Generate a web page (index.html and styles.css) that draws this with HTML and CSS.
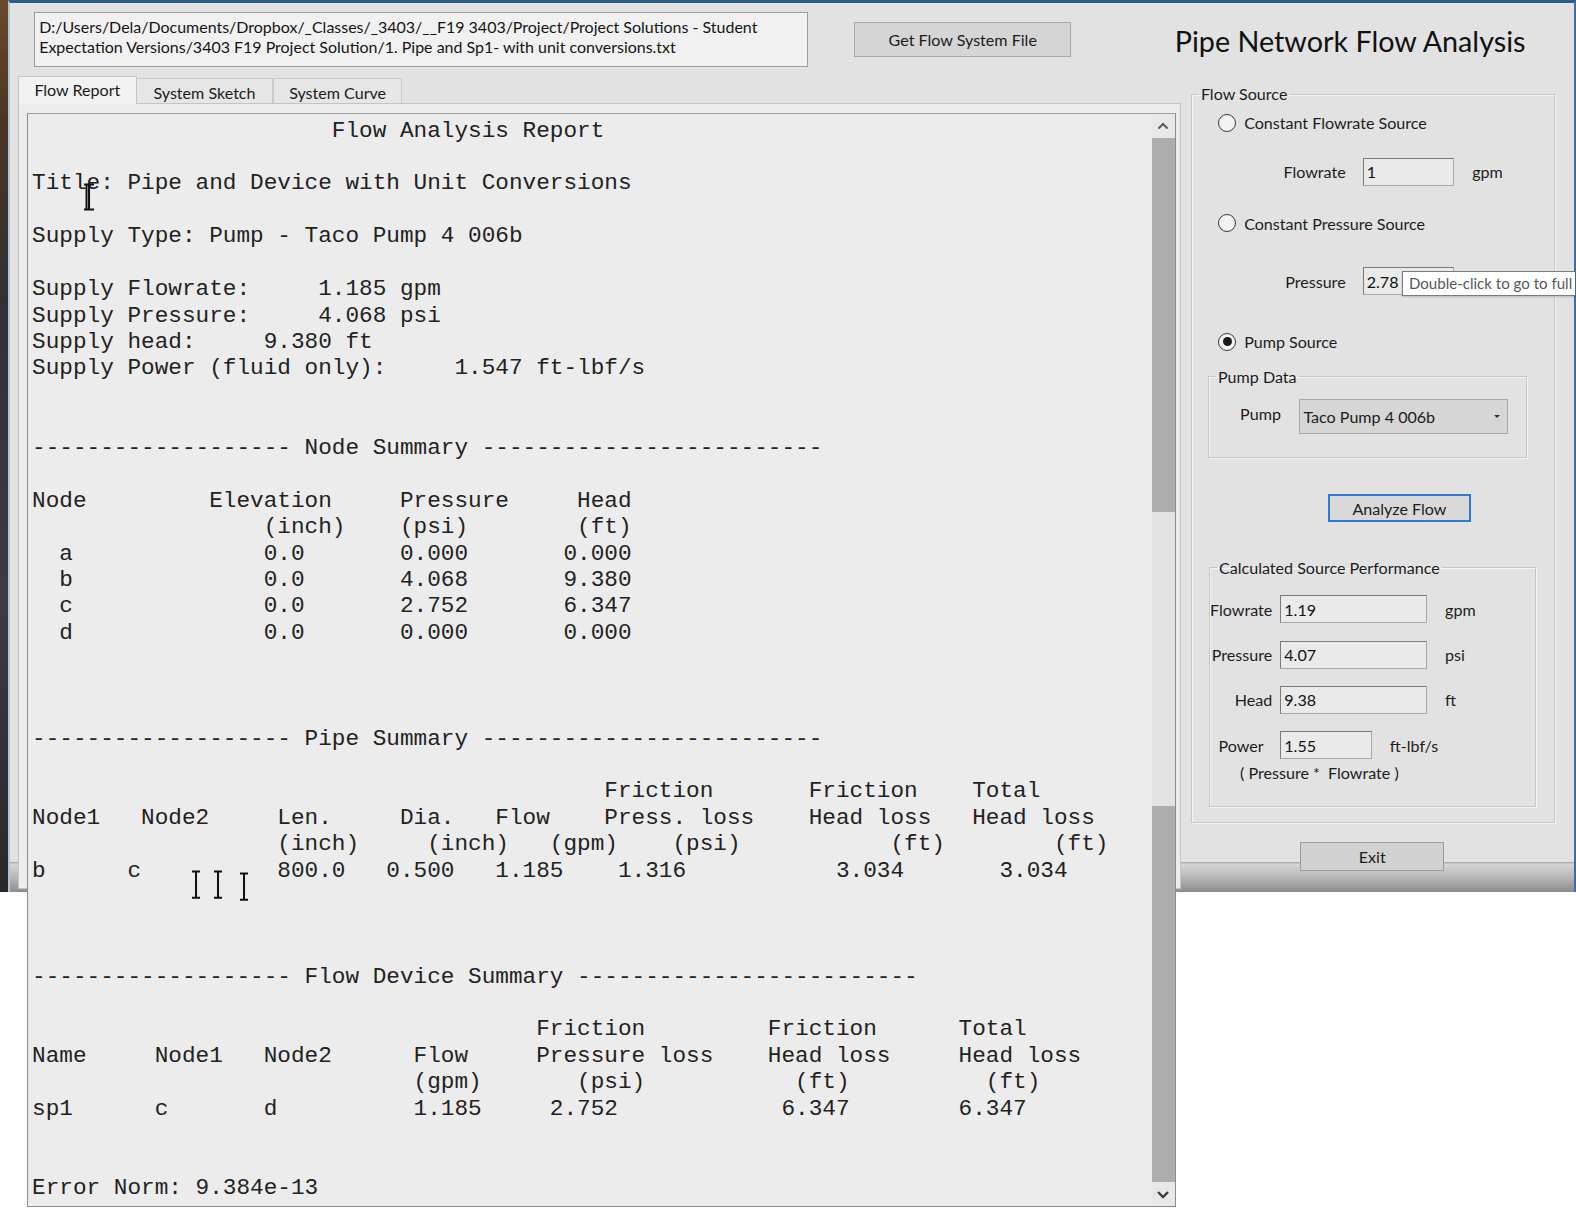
FILE: index.html
```html
<!DOCTYPE html>
<html>
<head>
<meta charset="utf-8">
<link rel="stylesheet" href="styles.css">
</head>
<body>
<div class="screen">
  <div class="desk-left"></div>
  <div class="window">
    <header class="win-header">
      <div class="path-box">D:/Users/Dela/Documents/Dropbox/_Classes/_3403/__F19 3403/Project/Project Solutions - Student<br>Expectation Versions/3403 F19 Project Solution/1. Pipe and Sp1- with unit conversions.txt</div>
      <button class="btn btn-file">Get Flow System File</button>
      <h1 class="app-title">Pipe Network Flow Analysis</h1>
    </header>
    <div class="win-body">
      <section class="left-col">
        <div class="tabs">
          <div class="tab tab-active">Flow Report</div>
          <div class="tab tab-sketch">System Sketch</div>
          <div class="tab tab-curve">System Curve</div>
        </div>
        <div class="pane">
          <div class="report">
<pre class="report-text">                      Flow Analysis Report

Title: Pipe and Device with Unit Conversions

Supply Type: Pump - Taco Pump 4 006b

Supply Flowrate:     1.185 gpm
Supply Pressure:     4.068 psi
Supply head:     9.380 ft
Supply Power (fluid only):     1.547 ft-lbf/s


------------------- Node Summary -------------------------

Node         Elevation     Pressure     Head
                 (inch)    (psi)        (ft)
  a              0.0       0.000       0.000
  b              0.0       4.068       9.380
  c              0.0       2.752       6.347
  d              0.0       0.000       0.000



------------------- Pipe Summary -------------------------

                                          Friction       Friction    Total
Node1   Node2     Len.     Dia.   Flow    Press. loss    Head loss   Head loss
                  (inch)     (inch)   (gpm)    (psi)           (ft)        (ft)
b      c          800.0   0.500   1.185    1.316           3.034       3.034



------------------- Flow Device Summary -------------------------

                                     Friction         Friction      Total
Name     Node1   Node2      Flow     Pressure loss    Head loss     Head loss
                            (gpm)       (psi)           (ft)          (ft)
sp1      c       d          1.185     2.752            6.347        6.347


Error Norm: 9.384e-13</pre>
            <div class="scrollbar">
              <div class="sb-btn">
                <svg width="16" height="14" viewBox="0 0 16 14"><polyline points="3.5,9.5 8,5 12.5,9.5" fill="none" stroke="#5a5a5a" stroke-width="2"/></svg>
              </div>
              <div class="sb-thumb sb-thumb-top"></div>
              <div class="sb-track"></div>
              <div class="sb-thumb sb-thumb-bottom"></div>
              <div class="sb-btn">
                <svg width="16" height="14" viewBox="0 0 16 14"><polyline points="3,5 8,10 13,5" fill="none" stroke="#3c3c3c" stroke-width="2.4"/></svg>
              </div>
            </div>
            <svg class="ibeam ibeam-title" width="12" height="28" viewBox="0 0 12 28"><path d="M1 1.5 H11 M6 1.5 V26.5 M1 26.5 H11 M3.5 1.5 V26.5" fill="none" stroke="#111" stroke-width="2"/></svg>
            <svg class="ibeam ibeam-1" width="10" height="29" viewBox="0 0 10 29"><path d="M1 1.5 H9 M5 1.5 V27.5 M1 27.5 H9" fill="none" stroke="#111" stroke-width="2"/></svg>
            <svg class="ibeam ibeam-2" width="10" height="29" viewBox="0 0 10 29"><path d="M1 1.5 H9 M5 1.5 V27.5 M1 27.5 H9" fill="none" stroke="#111" stroke-width="2"/></svg>
            <svg class="ibeam ibeam-3" width="10" height="29" viewBox="0 0 10 29"><path d="M1 1.5 H9 M5 1.5 V27.5 M1 27.5 H9" fill="none" stroke="#111" stroke-width="2"/></svg>
          </div>
        </div>
      </section>
      <aside class="right-col">
        <fieldset class="group flow-source">
          <legend>Flow Source</legend>
          <div class="radio-row row-r1"><span class="radio"></span><span>Constant Flowrate Source</span></div>
          <div class="field-row row-flow">
            <span class="field-label">Flowrate</span>
            <span class="input input-src">1</span>
            <span class="unit">gpm</span>
          </div>
          <div class="radio-row row-r2"><span class="radio"></span><span>Constant Pressure Source</span></div>
          <div class="field-row row-press">
            <span class="field-label">Pressure</span>
            <span class="input input-src input-tip">2.78<span class="tooltip">Double-click to go to full</span></span>
            <span class="unit">psi</span>
          </div>
          <div class="radio-row row-r3"><span class="radio radio-on"></span><span>Pump Source</span></div>
          <fieldset class="group pump-data">
            <legend>Pump Data</legend>
            <div class="pump-row">
              <span class="pump-label">Pump</span>
              <div class="combo"><span>Taco Pump 4 006b</span><svg width="8" height="5" viewBox="0 0 8 5"><path d="M1 1 H7 L4 4 Z" fill="#333"/></svg></div>
            </div>
          </fieldset>
          <button class="btn btn-analyze">Analyze Flow</button>
          <fieldset class="group calc">
            <legend>Calculated Source Performance</legend>
            <div class="calc-row">
              <span class="calc-label">Flowrate</span>
              <span class="input input-calc">1.19</span>
              <span class="unit">gpm</span>
            </div>
            <div class="calc-row">
              <span class="calc-label">Pressure</span>
              <span class="input input-calc">4.07</span>
              <span class="unit">psi</span>
            </div>
            <div class="calc-row">
              <span class="calc-label">Head</span>
              <span class="input input-calc">9.38</span>
              <span class="unit">ft</span>
            </div>
            <div class="calc-row">
              <span class="calc-label calc-label-center">Power</span>
              <span class="input input-power">1.55</span>
              <span class="unit">ft-lbf/s</span>
            </div>
            <div class="calc-note">( Pressure *&nbsp; Flowrate )</div>
          </fieldset>
        </fieldset>
        <button class="btn btn-exit">Exit</button>
      </aside>
    </div>
  </div>
</div>
</body>
</html>
```
FILE: styles.css
```css
html {
  margin: 0;
  padding: 0;
  background: #ffffff;
}
body {
  margin: 0;
  padding: 0;
  width: 1576px;
  height: 1226px;
  overflow: hidden;
  background: #ffffff;
  font-family: Lato, "Open Sans", sans-serif;
  font-size: 16px;
  color: #1c1c1c;
}
.screen {
  zoom: 1.005;
  display: flex;
  align-items: flex-start;
  width: 1568px;
  height: 1220px;
  overflow: hidden;
}
.desk-left {
  width: 8px;
  height: 888px;
  flex: none;
  background: linear-gradient(to bottom, #6a4a2c 0, #4a3524 120px, #2f3136 300px, #3a3c42 600px, #26282c 888px);
}
.window {
  box-sizing: border-box;
  width: 1560px;
  height: 888px;
  flex: none;
  border-top: 3px solid #2e5c8a;
  border-left: 2px solid #b5c3d1;
  border-right: 2px solid #3b6ea6;
  background: linear-gradient(to bottom, #e2e2e2 0, #e2e2e2 855px, #a8a8a8 855px, #d6d6d6 857px, #b4b4b4 871px, #8a8a8a 885px);
  display: flex;
  flex-direction: column;
}
.win-header {
  height: 73px;
  flex: none;
  display: flex;
  align-items: flex-start;
}
.win-header > * {
  flex: none;
}
.path-box {
  box-sizing: border-box;
  margin: 9px 0 0 24px;
  width: 770px;
  height: 55px;
  padding: 4px 0 0 4px;
  background: #f1f1f1;
  border: 1px solid #9c9c9c;
  font-size: 15.9px;
  line-height: 20px;
  color: #141414;
  white-space: nowrap;
  overflow: hidden;
}
.btn {
  box-sizing: border-box;
  font-family: Lato, "Open Sans", sans-serif;
  font-size: 16px;
  color: #1c1c1c;
  background: #d5d5d5;
  border: 1px solid #a9a9a9;
  padding: 0;
  display: flex;
  align-items: center;
  justify-content: center;
}
.btn-file {
  margin: 19px 0 0 46px;
  width: 216px;
  height: 35px;
}
.app-title {
  margin: 21px 0 0 103px;
  width: 360px;
  font-weight: normal;
  font-size: 28.6px;
  line-height: 34px;
  color: #111;
  white-space: nowrap;
}
.win-body {
  flex: 1;
  display: grid;
  grid-template-columns: 1166px 390px;
  min-height: 0;
}
.left-col {
  padding-left: 8px;
  min-height: 0;
  min-width: 0;
}
.tabs {
  display: flex;
  align-items: flex-end;
  height: 27px;
  position: relative;
  z-index: 2;
}
.tab {
  box-sizing: border-box;
  height: 25px;
  background: #e6e6e6;
  border: 1px solid #cacaca;
  border-bottom: none;
  display: flex;
  align-items: center;
  justify-content: center;
  padding-top: 3px;
  color: #1a1a1a;
}
.tab-active {
  height: 28px;
  margin-bottom: -1px;
  width: 118px;
  background: #f2f2f2;
  border-color: #c4c4c4;
  padding-top: 0;
  padding-bottom: 2px;
}
.tab-sketch {
  width: 136px;
  border-left: none;
}
.tab-curve {
  width: 128px;
  border-left: 1px solid #cacaca;
}
.pane {
  box-sizing: border-box;
  width: 1157px;
  height: 782px;
  border: 1px solid #c4c4c4;
  background: #ededed;
  padding: 8px 0 0 8px;
}
.report {
  position: relative;
  box-sizing: border-box;
  width: 1143px;
  height: 1089px;
  background: #ececec;
  border: 1px solid #8c8c8c;
  border-top-color: #a0a0a0;
  display: flex;
  z-index: 3;
}
.report-text {
  flex: 1;
  margin: 0;
  padding: 4px 0 0 4px;
  font-family: "Liberation Mono", "Courier New", monospace;
  font-size: 22.6px;
  line-height: 26.3px;
  color: #222;
  overflow: hidden;
}
.scrollbar {
  width: 23px;
  flex: none;
  display: flex;
  flex-direction: column;
  background: #e6e6e6;
}
.sb-btn {
  height: 24px;
  flex: none;
  display: flex;
  align-items: center;
  justify-content: center;
  background: #e8e8e8;
}
.sb-thumb {
  background: #adadad;
  flex: none;
}
.sb-thumb-top {
  height: 373px;
}
.sb-track {
  flex: 1;
  background: #e3e3e3;
}
.sb-thumb-bottom {
  height: 374px;
}
.ibeam {
  position: absolute;
}
.ibeam-title {
  left: 55px;
  top: 69px;
}
.ibeam-1 {
  left: 162px;
  top: 753px;
}
.ibeam-2 {
  left: 184px;
  top: 753px;
}
.ibeam-3 {
  left: 210px;
  top: 755px;
}
.right-col {
  min-width: 0;
}
.group {
  margin: 0;
  padding: 0;
  min-width: 0;
  box-sizing: border-box;
  border: 1px solid #c6c6c6;
  box-shadow: inset 1px 1px 0 #f4f4f4, 1px 1px 0 #f4f4f4;
}
.group legend {
  margin-left: 7px;
  padding: 0 2px;
  font-size: 16px;
  line-height: 18px;
  color: #1c1c1c;
}
.flow-source {
  margin: 9px 0 0 9px;
  width: 362px;
  padding-bottom: 15px;
}
.radio-row {
  display: flex;
  align-items: center;
  padding-left: 26px;
  gap: 8px;
}
.row-r1 { height: 38px; }
.row-r2 { height: 42px; }
.row-r3 { height: 46px; }
.radio {
  box-sizing: border-box;
  width: 18px;
  height: 18px;
  border-radius: 50%;
  border: 1px solid #3a3a3a;
  background: #f3f3f3;
  display: flex;
  align-items: center;
  justify-content: center;
}
.radio-on::after {
  content: "";
  width: 9px;
  height: 9px;
  border-radius: 50%;
  background: #1a1a1a;
}
.field-row {
  display: flex;
  align-items: center;
}
.row-flow { height: 60px; }
.row-press { height: 74px; }
.field-label {
  width: 153px;
  text-align: right;
}
.input {
  box-sizing: border-box;
  height: 28px;
  background: #eaeaea;
  border: 1px solid #7a7a7a;
  border-right-color: #a8a8a8;
  border-bottom-color: #a8a8a8;
  display: flex;
  align-items: center;
  padding-left: 3px;
  color: #111;
}
.input-src {
  margin-left: 17px;
  width: 91px;
}
.input-tip {
  position: relative;
}
.tooltip {
  position: absolute;
  left: 38px;
  top: 3px;
  box-sizing: border-box;
  width: 172px;
  height: 25px;
  padding: 0 0 0 6px;
  background: #ffffff;
  border: 1px solid #7b7b7b;
  border-right: none;
  box-shadow: 0 2px 2px rgba(0, 0, 0, 0.18);
  font-size: 15px;
  line-height: 23px;
  color: #575757;
  white-space: nowrap;
  overflow: hidden;
}
.unit {
  margin-left: 18px;
}
.pump-data {
  margin: 3px 0 0 16px;
  width: 317px;
  padding-bottom: 23px;
}
.pump-row {
  display: flex;
  align-items: center;
  margin-top: 13px;
}
.pump-label {
  margin-left: 31px;
  width: 42px;
  margin-top: -6px;
}
.combo {
  box-sizing: border-box;
  margin-left: 17px;
  width: 208px;
  height: 35px;
  background: #d6d6d6;
  border: 1px solid #a7a7a7;
  display: flex;
  align-items: center;
  justify-content: space-between;
  padding: 0 6px 0 3px;
}
.btn-analyze {
  margin: 36px 0 0 135px;
  width: 143px;
  height: 28px;
  border: 2px solid #2f7ad0;
  background: #d9d9d9;
}
.calc {
  margin: 36px 0 0 17px;
  width: 325px;
  padding: 10px 0 24px 0;
}
.calc-row {
  height: 45px;
  display: flex;
  align-items: center;
}
.calc-label {
  width: 62px;
  text-align: right;
}
.calc-label-center {
  text-align: center;
}
.input-calc {
  margin-left: 8px;
  width: 146px;
}
.input-power {
  margin-left: 8px;
  width: 91px;
}
.calc-note {
  margin-top: -4px;
  height: 18px;
  line-height: 18px;
  padding-left: 30px;
}
.btn-exit {
  position: relative;
  z-index: 1;
  margin: 19px 0 0 118px;
  width: 143px;
  height: 29px;
  background: #d2d2d2;
  border-color: #9d9d9d;
}
```
